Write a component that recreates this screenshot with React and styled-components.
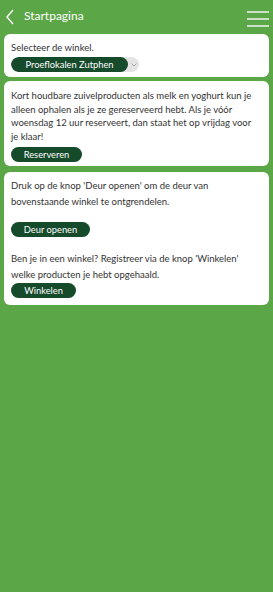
import React from "react";
import styled, { createGlobalStyle } from "styled-components";

const GlobalStyle = createGlobalStyle`
  html, body {
    margin: 0;
    padding: 0;
    background: #5ba646;
  }
  body {
    font-family: "Lato", "Open Sans", sans-serif;
  }
`;

const Page = styled.div`
  width: 273px;
  min-height: 592px;
  background-color: #5ba646;
`;

const Header = styled.div`
  height: 34px;
  display: flex;
  align-items: center;
  padding: 0 4px 0 5px;
  box-sizing: border-box;
`;

const Title = styled.h1`
  flex: 1;
  margin: 0 0 0 9px;
  font-size: 12px;
  font-weight: 400;
  color: #ffffff;
  position: relative;
  top: -2px;
`;

const IconButton = styled.div`
  display: flex;
  align-items: center;
  justify-content: center;
`;

const Content = styled.div`
  display: flex;
  flex-direction: column;
  gap: 4px;
  padding: 0 4px;
`;

const Card = styled.div`
  background-color: #ffffff;
  border-radius: 6px;
  padding: ${(p) => p.$pad || "7px 7px"};
  margin-top: ${(p) => p.$mt || 0}px;
  color: #333;
`;

const Text = styled.p`
  margin: 0;
  margin-top: ${(p) => p.$mt || 0}px;
  font-size: 9.5px;
  line-height: ${(p) => p.$lh || "13.4px"};
  color: #333;
`;

const PillButton = styled.button`
  display: flex;
  align-items: center;
  justify-content: center;
  width: ${(p) => p.$w}px;
  height: 15px;
  margin-top: ${(p) => p.$mt || 0}px;
  padding: 0;
  border: none;
  border-radius: 8px;
  background-color: #154a2b;
  color: #ffffff;
  font-family: "Lato", "Open Sans", sans-serif;
  font-size: 9.3px;
`;

const Select = styled.div`
  display: flex;
  width: 128px;
  height: 15px;
  margin-top: 3px;
  border-radius: 8px;
  overflow: hidden;
  background-color: #e4e4e4;
`;

const SelectValue = styled.div`
  flex: 1;
  display: flex;
  align-items: center;
  justify-content: center;
  background-color: #154a2b;
  color: #ffffff;
  font-size: 9.3px;
  border-radius: 8px;
`;

const SelectArrow = styled.div`
  width: 11px;
  display: flex;
  align-items: center;
  justify-content: center;
`;

export default function App() {
  return (
    <Page>
      <GlobalStyle />
      <Header>
        <IconButton>
          <svg width="10" height="16" viewBox="0 0 10 16">
            <path d="M8 1 L2 8 L8 15" fill="none" stroke="#fff" strokeWidth="1.4" />
          </svg>
        </IconButton>
        <Title>Startpagina</Title>
        <IconButton>
          <svg width="22" height="20" viewBox="0 0 22 20">
            <path d="M0 5 H22 M0 12 H22 M0 19 H22" stroke="#f2f2f2" strokeWidth="1.6" />
          </svg>
        </IconButton>
      </Header>
      <Content>
        <Card $pad="7px 7px 5px">
          <Text>Selecteer de winkel.</Text>
          <Select>
            <SelectValue>Proeflokalen Zutphen</SelectValue>
            <SelectArrow>
              <svg width="6" height="4" viewBox="0 0 6 4">
                <path d="M0.5 0.5 L3 3 L5.5 0.5" fill="none" stroke="#999" strokeWidth="0.8" />
              </svg>
            </SelectArrow>
          </Select>
        </Card>
        <Card $pad="8px 12px 4px 7px">
          <Text>
            Kort houdbare zuivelproducten als melk en yoghurt kun je alleen ophalen als je ze
            gereserveerd hebt. Als je vóór woensdag 12 uur reserveert, dan staat het op vrijdag
            voor je klaar!
          </Text>
          <PillButton $w={71} $mt={4}>Reserveren</PillButton>
        </Card>
        <Card $pad="6px 7px 7px" $mt={2}>
          <Text $lh="16px">
            Druk op de knop 'Deur openen' om de deur van bovenstaande winkel te ontgrendelen.
          </Text>
          <PillButton $w={79} $mt={12}>Deur openen</PillButton>
          <Text $lh="16px" $mt={14}>
            Ben je in een winkel? Registreer via de knop 'Winkelen' welke producten je hebt
            opgehaald.
          </Text>
          <PillButton $w={65}>Winkelen</PillButton>
        </Card>
      </Content>
    </Page>
  );
}
